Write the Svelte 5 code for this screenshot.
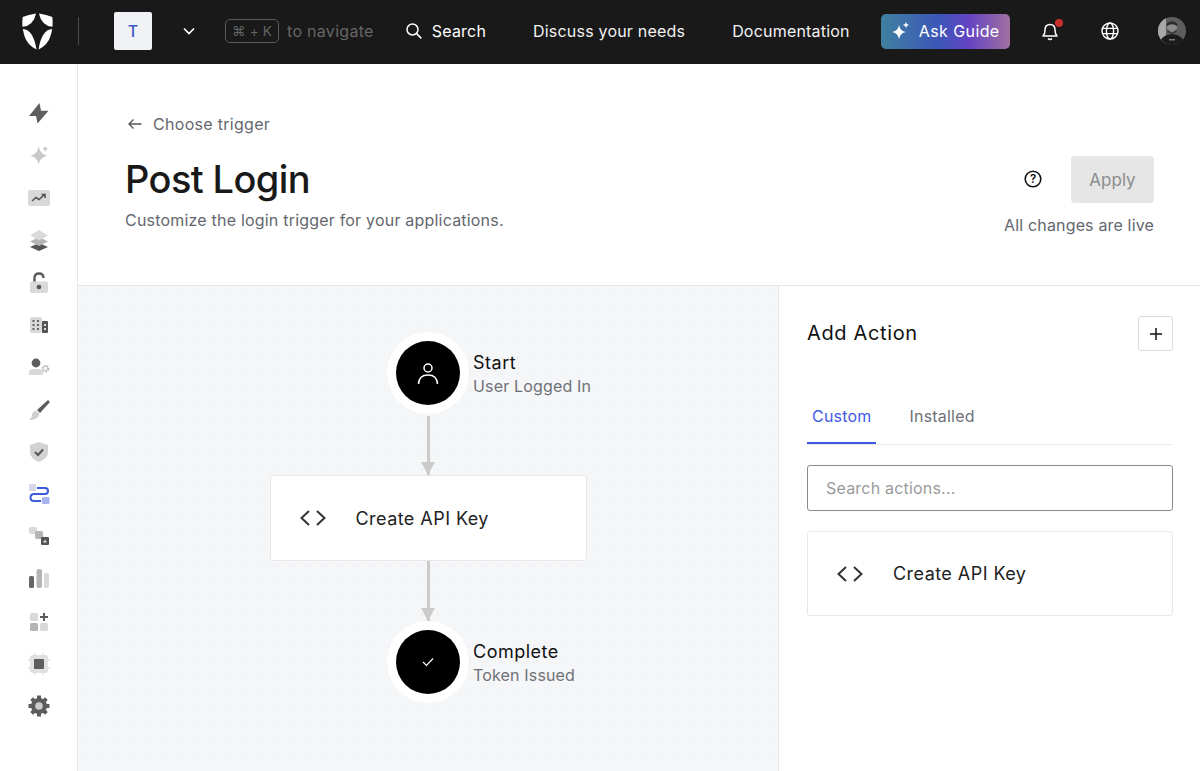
<script>
  const navLinks = ['Discuss your needs', 'Documentation'];
</script>

<div class="page">
  <header class="topbar">
    <svg class="logo" viewBox="0 0 30 36" width="31" height="37">
      <g fill="#fff">
        <path d="M13.6 0.4 Q6 1.4 0.6 4 Q0 9 0.4 13.4 Q11 12.5 13.6 0.4 Z" />
        <path d="M16.4 0.4 Q24 1.4 29.4 4 Q30 9 29.6 13.4 Q19 12.5 16.4 0.4 Z" />
        <path d="M0.7 15.6 Q11 16.5 14 35.4 Q5 31 2.4 22.5 Q1.2 18.5 0.7 15.6 Z" />
        <path d="M29.3 15.6 Q19 16.5 16 35.4 Q25 31 27.6 22.5 Q28.8 18.5 29.3 15.6 Z" />
      </g>
    </svg>
    <span class="top-divider"></span>
    <span class="tenant">T</span>
    <svg class="chevron" viewBox="0 0 14 10" width="14" height="10"><path d="M2 2.5 L7 7.5 L12 2.5" fill="none" stroke="#fff" stroke-width="1.6" /></svg>
    <span class="kbd">⌘ + K</span>
    <span class="hint">to navigate</span>
    <svg class="search-icon" viewBox="0 0 18 18" width="18" height="18"><circle cx="7.5" cy="7.5" r="5.5" fill="none" stroke="#fff" stroke-width="1.5" /><path d="M11.6 11.6 L16.4 16.4" stroke="#fff" stroke-width="1.5" /></svg>
    <span class="search-label">Search</span>
    {#each navLinks as link}
      <span class="top-link">{link}</span>
    {/each}
    <button class="guide">
      <svg viewBox="0 0 20 20" width="20" height="20"><path d="M8 4 Q9 10 15 11 Q9 12 8 18 Q7 12 1 11 Q7 10 8 4 Z M15 1 Q15.4 3.6 18 4 Q15.4 4.4 15 7 Q14.6 4.4 12 4 Q14.6 3.6 15 1 Z" fill="#fff" /></svg>
      Ask Guide
    </button>
    <span class="bell">
      <svg viewBox="0 0 20 22" width="20" height="22"><path d="M3 16 Q5 14 5 10 Q5 4.5 10 4.5 Q15 4.5 15 10 Q15 14 17 16 Z M8 18.5 Q10 20.5 12 18.5" fill="none" stroke="#fff" stroke-width="1.5" stroke-linejoin="round" /></svg>
      <i class="badge"></i>
    </span>
    <svg class="globe" viewBox="0 0 20 20" width="20" height="20"><g fill="none" stroke="#fff" stroke-width="1.4"><circle cx="10" cy="10" r="8" /><ellipse cx="10" cy="10" rx="3.6" ry="8" /><path d="M2 7.4 H18 M2 12.6 H18" /></g></svg>
    <svg class="avatar" viewBox="0 0 28 28" width="28" height="28">
      <clipPath id="av"><circle cx="14" cy="14" r="14" /></clipPath>
      <g clip-path="url(#av)">
        <rect width="28" height="28" fill="#5e5e5e" />
        <rect x="0" y="0" width="8" height="28" fill="#a8a8a8" />
        <ellipse cx="14" cy="10.5" rx="5" ry="6.5" fill="#8b8b8b" />
        <path d="M8.5 7 Q14 1 19.5 7 L19 9 Q14 5.5 9 9 Z" fill="#2e2e2e" />
        <path d="M9.5 12 Q14 18.5 18.5 12 L18.5 15 Q14 19 9.5 15 Z" fill="#3c3c3c" />
        <path d="M1 28 Q2 18 14 17 Q26 18 27 28 Z" fill="#1c1c1c" />
        <rect x="11" y="22" width="6" height="1.5" fill="#777" />
      </g>
    </svg>
  </header>

  <div class="body">
    <nav class="sidebar">
      <svg viewBox="0 0 24 24"><polygon points="12.5,2 2,15 9,15 10.5,22.5 21.5,9.7 14,9.7" fill="#5f5f5f" /></svg>
      <svg viewBox="0 0 24 24"><path d="M11.7 3.5 Q13 11 20 12.7 Q13 14.4 11.7 21 Q10.4 14.4 3.5 12.7 Q10.4 11 11.7 3.5 Z" fill="#c8c8c8" /><path d="M18.3 2.5 Q18.6 5.3 21.5 5.8 Q18.6 6.3 18.3 9 Q18 6.3 15.1 5.8 Q18 5.3 18.3 2.5 Z" fill="#c8c8c8" /></svg>
      <svg viewBox="0 0 24 24"><rect x="1" y="4" width="22" height="16" rx="2" fill="#d9d9d9" /><path d="M5 15 L9 11.5 L12 13.5 L17 9 M14.5 8.5 H18 V12" fill="none" stroke="#555" stroke-width="1.6" /></svg>
      <svg viewBox="0 0 24 24"><path d="M12 15 L21 19 L12 23 L3 19 Z" fill="#555" /><path d="M12 9 L21 13.5 L12 18 L3 13.5 Z" fill="#b5b5b5" /><path d="M12 2 L21 7.5 L12 12.5 L3 7.5 Z" fill="#d9d9d9" /></svg>
      <svg viewBox="0 0 24 24"><path d="M7.5 11 V7 Q7.5 2.5 12 2.5 Q16.5 2.5 16.5 7" fill="none" stroke="#5a5a5a" stroke-width="2.4" /><rect x="3" y="10.5" width="18" height="11.5" rx="2" fill="#d9d9d9" /><circle cx="12" cy="16" r="2.3" fill="#555" /></svg>
      <svg viewBox="0 0 24 24"><rect x="3" y="4" width="12" height="16" rx="2" fill="#d9d9d9" /><rect x="15" y="8" width="6" height="12" rx="1" fill="#555" /><g fill="#666"><rect x="5.5" y="7" width="2" height="2" /><rect x="10" y="7" width="2" height="2" /><rect x="5.5" y="11" width="2" height="2" /><rect x="10" y="11" width="2" height="2" /><rect x="5.5" y="15" width="2" height="2" /><rect x="10" y="15" width="2" height="2" /></g><g fill="#ddd"><rect x="17" y="11" width="2" height="2" /><rect x="17" y="15" width="2" height="2" /></g></svg>
      <svg viewBox="0 0 24 24"><circle cx="9" cy="8" r="4.4" fill="#5c5c5c" /><path d="M2 20 V17.5 Q2 14 6 14 H12 Q16 14 16 17.5 V20 Z" fill="#d9d9d9" /><circle cx="18.5" cy="13.5" r="2.6" fill="none" stroke="#b0b0b0" stroke-width="2.2" stroke-dasharray="1.6 1" /></svg>
      <svg viewBox="0 0 24 24"><path d="M21 2 L23 4 L13 15 L10 12 Z" fill="#5c5c5c" /><path d="M9 12.5 L12.5 16 Q11 22 2 22 Q5 20 5 17 Q5 13.5 9 12.5 Z" fill="#cfcfcf" /></svg>
      <svg viewBox="0 0 24 24"><path d="M12 2 L21 5 V12 Q21 18.5 12 22 Q3 18.5 3 12 V5 Z" fill="#d2d2d2" /><path d="M8 12 L11 15 L16 9.5" fill="none" stroke="#555" stroke-width="2" /></svg>
      <svg viewBox="0 0 24 24"><rect x="2" y="1" width="7" height="7" rx="1" fill="#d6d6e4" /><path d="M10 5 H18 Q21 5 21 8 Q21 11 18 11 H7 Q3.5 11 3.5 14.5 Q3.5 18 7 18 H14" fill="none" stroke="#3b5bdb" stroke-width="2" /><rect x="15" y="14" width="7.5" height="7" rx="1" fill="#a9b6ee" /></svg>
      <svg viewBox="0 0 24 24"><rect x="2" y="2" width="8" height="7" rx="2" fill="#d9d9d9" /><rect x="8" y="6" width="8" height="8" rx="2" fill="#b5b5b5" /><rect x="14" y="12" width="8" height="8" rx="1" fill="#555" /><path d="M18 14.5 L20 17.5 H16 Z" fill="#ddd" /></svg>
      <svg viewBox="0 0 24 24"><rect x="2" y="9" width="5" height="12" rx="1.5" fill="#666" /><rect x="9.5" y="2" width="5.5" height="19" rx="2" fill="#b5b5b5" /><rect x="17" y="6" width="5" height="15" rx="2" fill="#d9d9d9" /></svg>
      <svg viewBox="0 0 24 24"><rect x="3" y="3" width="8" height="8" rx="1.5" fill="#d9d9d9" /><rect x="3" y="13" width="8" height="8" rx="1.5" fill="#b5b5b5" /><rect x="13" y="13" width="8" height="8" rx="1.5" fill="#d9d9d9" /><path d="M17 3 V11 M13 7 H21" stroke="#5c5c5c" stroke-width="2" /></svg>
      <svg viewBox="0 0 24 24"><rect x="3" y="3" width="18" height="18" rx="3" fill="#e0e0e0" /><path d="M8 1 V23 M16 1 V23 M1 8 H23 M1 16 H23" stroke="#e0e0e0" stroke-width="1.5" /><rect x="7" y="7" width="10" height="10" rx="1" fill="#5c5c5c" /></svg>
      <svg viewBox="0 0 24 24"><circle cx="12" cy="12" r="8" fill="#5c5c5c" /><path d="M12 1.5 V22.5 M1.5 12 H22.5 M4.6 4.6 L19.4 19.4 M19.4 4.6 L4.6 19.4" stroke="#5c5c5c" stroke-width="4" /><circle cx="12" cy="12" r="3.8" fill="#ccc" /></svg>
    </nav>

    <main class="content">
      <section class="head">
        <div>
          <a class="back" href="#trigger">
            <svg viewBox="0 0 16 12" width="16" height="12"><path d="M14.5 6 H2 M6.5 1.5 L2 6 L6.5 10.5" fill="none" stroke="#555" stroke-width="1.3" /></svg>
            Choose trigger
          </a>
          <h1>Post Login</h1>
          <p>Customize the login trigger for your applications.</p>
        </div>
        <div class="head-actions">
          <div class="apply-row">
            <svg class="help" viewBox="0 0 20 20" width="20" height="20"><circle cx="10" cy="10" r="7.8" fill="none" stroke="#111" stroke-width="1.6" /><text x="10" y="14" text-anchor="middle" class="q">?</text></svg>
            <button class="apply">Apply</button>
          </div>
          <span class="live">All changes are live</span>
        </div>
      </section>

      <section class="workspace">
        <div class="canvas">
          <div class="node">
            <span class="disc">
              <svg viewBox="0 0 24 24" width="24" height="24"><g fill="none" stroke="#fff" stroke-width="1.5"><circle cx="12" cy="7" r="4" /><path d="M2.5 23 Q3 14 12 14 Q21 14 21.5 23" /></g></svg>
            </span>
            <div class="node-label"><strong>Start</strong><span>User Logged In</span></div>
          </div>
          <span class="arrow first"></span>
          <div class="action flow-action">
            <svg viewBox="0 0 28 18" width="28" height="18"><path d="M10 2 L2.5 9 L10 16 M18 2 L25.5 9 L18 16" fill="none" stroke="#333" stroke-width="2" /></svg>
            <span>Create API Key</span>
          </div>
          <span class="arrow"></span>
          <div class="node">
            <span class="disc">
              <svg viewBox="0 0 12 10" width="12" height="10"><path d="M1 5 L4.5 8.5 L11 1.5" fill="none" stroke="#fff" stroke-width="1.2" /></svg>
            </span>
            <div class="node-label"><strong>Complete</strong><span>Token Issued</span></div>
          </div>
        </div>

        <aside class="panel">
          <div class="panel-head">
            <h2>Add Action</h2>
            <button class="plus" aria-label="Add action">
              <svg viewBox="0 0 12 12" width="12" height="12"><path d="M6 0 V12 M0 6 H12" stroke="#111" stroke-width="1.5" /></svg>
            </button>
          </div>
          <div class="tabs">
            <span class="tab active">Custom</span>
            <span class="tab">Installed</span>
          </div>
          <input class="search" placeholder="Search actions..." />
          <div class="action list-action">
            <svg viewBox="0 0 28 18" width="28" height="18"><path d="M10 2 L2.5 9 L10 16 M18 2 L25.5 9 L18 16" fill="none" stroke="#333" stroke-width="2" /></svg>
            <span>Create API Key</span>
          </div>
        </aside>
      </section>
    </main>
  </div>
</div>

<style>
  :global(body) {
    font-family: Inter, 'Liberation Sans', sans-serif;
    background: #fff;
    color: #191919;
  }

  .page {
    width: 1200px;
    height: 771px;
    overflow: hidden;
    display: flex;
    flex-direction: column;
  }

  .topbar {
    height: 64px;
    flex: none;
    box-sizing: border-box;
    padding: 0 0 2px 22px;
    background: #191919;
    display: flex;
    align-items: center;
    color: #fff;
    font-size: 16px;
    letter-spacing: 0.2px;
  }

  .top-divider {
    width: 1px;
    height: 28px;
    background: #4a4a4a;
    margin: 0 35px 0 25px;
  }

  .tenant {
    width: 38px;
    height: 38px;
    border-radius: 2px;
    background: #f1f2f6;
    color: #3f59c4;
    display: flex;
    align-items: center;
    justify-content: center;
    font-weight: 500;
  }

  .chevron {
    margin: 0 29px 0 30px;
  }

  .kbd {
    width: 54px;
    height: 24px;
    box-sizing: border-box;
    border: 1px solid #5a5a5a;
    border-radius: 5px;
    color: #666;
    font-size: 13.5px;
    display: flex;
    align-items: center;
    justify-content: center;
    margin-right: 8px;
  }

  .hint {
    color: #666;
    margin-right: 31px;
    letter-spacing: 0.3px;
  }

  .search-label {
    margin: 0 47px 0 9px;
  }

  .top-link {
    margin-right: 47px;
    color: #f2f2f2;
  }

  .guide {
    width: 129px;
    height: 35px;
    margin-left: -16px;
    border: 0;
    border-radius: 5px;
    background: linear-gradient(90deg, #3f819f 0%, #3c56b8 45%, #6444c4 68%, #a0709f 100%);
    color: #fff;
    font: inherit;
    letter-spacing: 0.4px;
    display: flex;
    align-items: center;
    justify-content: center;
    gap: 8px;
  }

  .bell {
    position: relative;
    display: flex;
    margin-left: 30px;
  }

  .badge {
    position: absolute;
    top: -1px;
    right: -3px;
    width: 8px;
    height: 8px;
    border-radius: 50%;
    background: #c9302c;
  }

  .globe {
    margin-left: 40px;
  }

  .avatar {
    margin-left: 38px;
  }

  .body {
    flex: 1;
    display: flex;
    min-height: 0;
  }

  .sidebar {
    width: 77px;
    flex: none;
    border-right: 1px solid #e6e6e6;
    padding-top: 37px;
    display: flex;
    flex-direction: column;
    align-items: center;
    gap: 18.4px;
  }

  .sidebar svg {
    width: 24px;
    height: 24px;
    flex: none;
  }

  .content {
    flex: 1;
    display: flex;
    flex-direction: column;
    min-width: 0;
  }

  .head {
    height: 222px;
    flex: none;
    box-sizing: border-box;
    border-bottom: 1px solid #e6e6e6;
    padding: 50px 46px 0 47px;
    display: flex;
    justify-content: space-between;
  }

  .back {
    display: flex;
    align-items: center;
    gap: 10px;
    color: #65676e;
    font-size: 16px;
    line-height: 20px;
    letter-spacing: 0.3px;
    text-decoration: none;
    margin-left: 2px;
  }

  h1 {
    margin: 21px 0 0;
    font-size: 38px;
    font-weight: 500;
    line-height: 48px;
    letter-spacing: -0.6px;
  }

  .head p {
    margin: 5px 0 0;
    font-size: 16px;
    line-height: 24px;
    letter-spacing: 0.2px;
    color: #65676e;
  }

  .head-actions {
    display: flex;
    flex-direction: column;
    align-items: flex-end;
    padding-top: 42px;
  }

  .apply-row {
    display: flex;
    align-items: center;
    gap: 28px;
  }

  .help {
    margin-top: -2px;
  }

  .q {
    font-size: 11.5px;
    font-weight: 600;
    fill: #111;
  }

  .apply {
    width: 83px;
    height: 47px;
    border: 0;
    border-radius: 4px;
    background: #e6e6e6;
    color: #8c8c8c;
    font: inherit;
    font-size: 17px;
  }

  .live {
    margin-top: 12px;
    font-size: 16px;
    line-height: 20px;
    letter-spacing: 0.16px;
    color: #65676e;
  }

  .workspace {
    flex: 1;
    display: flex;
    min-height: 0;
  }

  .canvas {
    width: 700px;
    flex: none;
    box-sizing: border-box;
    padding-top: 46px;
    background-color: #f5f6f8;
    background-image: radial-gradient(circle, #ecedf1 1px, transparent 1.2px);
    background-size: 16px 16px;
    display: flex;
    flex-direction: column;
    align-items: center;
  }

  .node {
    position: relative;
    width: 82px;
    height: 82px;
    flex: none;
    border-radius: 50%;
    background: #fff;
    display: flex;
    align-items: center;
    justify-content: center;
  }

  .disc {
    width: 64px;
    height: 64px;
    border-radius: 50%;
    background: #000;
    display: flex;
    align-items: center;
    justify-content: center;
  }

  .node-label {
    position: absolute;
    left: 86px;
    top: 19px;
    display: flex;
    flex-direction: column;
    white-space: nowrap;
  }

  .node-label strong {
    font-size: 18px;
    font-weight: 400;
    line-height: 24px;
    letter-spacing: 0.5px;
    color: #111;
  }

  .node-label span {
    font-size: 16px;
    line-height: 23px;
    letter-spacing: 0.16px;
    color: #6f7176;
  }

  .arrow {
    width: 3px;
    height: 60px;
    flex: none;
    background: #cbcbcb;
    position: relative;
  }

  .arrow.first {
    height: 59px;
    margin-top: 2px;
  }

  .arrow::after {
    content: '';
    position: absolute;
    left: -5.5px;
    bottom: 0;
    border-left: 7px solid transparent;
    border-right: 7px solid transparent;
    border-top: 13px solid #cbcbcb;
  }

  .action {
    box-sizing: border-box;
    background: #fff;
    border: 1px solid #e8e8e8;
    border-radius: 3px;
    display: flex;
    align-items: center;
    font-size: 18px;
    letter-spacing: 0.45px;
    color: #222;
    height: 86px;
    flex: none;
  }

  .flow-action {
    width: 317px;
    padding-left: 28px;
    gap: 29px;
  }

  .panel {
    flex: 1;
    border-left: 1px solid #e6e6e6;
    padding: 30px 27px 0 28px;
    box-sizing: border-box;
    background: #fff;
  }

  .panel-head {
    display: flex;
    align-items: center;
    justify-content: space-between;
  }

  h2 {
    margin: 0 0 2px;
    font-size: 20px;
    font-weight: 400;
    letter-spacing: 0.65px;
    color: #111;
  }

  .plus {
    width: 35px;
    height: 35px;
    padding: 0;
    border: 1px solid #dcdcdc;
    border-radius: 3px;
    background: #fff;
    display: flex;
    align-items: center;
    justify-content: center;
  }

  .tabs {
    margin-top: 41px;
    display: flex;
    gap: 28px;
    border-bottom: 1px solid #e8e8e8;
    height: 52px;
    font-size: 16px;
    letter-spacing: 0.2px;
  }

  .tab {
    height: 52px;
    box-sizing: border-box;
    padding: 14px 5px 0 5px;
    color: #6f7176;
  }

  .active {
    color: #3f59e4;
    border-bottom: 2px solid #3f59e4;
  }

  .search {
    display: block;
    width: 100%;
    height: 46px;
    box-sizing: border-box;
    margin-top: 20px;
    border: 1px solid #8a8a8a;
    border-radius: 3px;
    padding: 0 18px;
    font: inherit;
    font-size: 16px;
    letter-spacing: 0.2px;
    outline: 0;
  }

  .search::placeholder {
    color: #9a9a9a;
  }

  .list-action {
    margin-top: 20px;
    height: 85px;
    padding-left: 28px;
    gap: 29px;
  }
</style>
